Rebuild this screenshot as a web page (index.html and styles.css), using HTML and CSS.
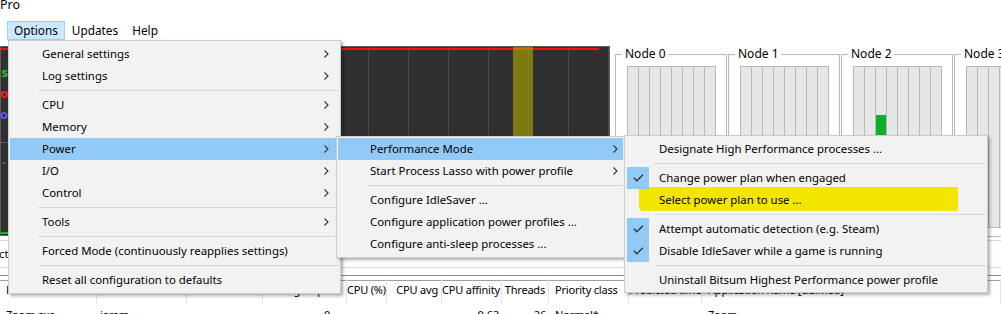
FILE: index.html
```html
<!DOCTYPE html>
<html>
<head>
<meta charset="utf-8">
<title>Process Lasso Pro</title>
<link rel="stylesheet" href="styles.css">
</head>
<body>
<div class="app">
  <div class="titlebar"><span class="title">Pro</span></div>
  <div class="menubar">
    <span class="mb-item active">Options</span>
    <span class="mb-item">Updates</span>
    <span class="mb-item">Help</span>
  </div>
  <div class="workspace">
    <div class="graph">
      <div class="legend">
        <span class="lg-green">ss</span>
        <span class="lg-red">o</span>
        <span class="lg-blue">o</span>
        <span class="lg-dots">..</span>
      </div>
      <div class="red-line"></div>
      <div class="hline"></div>
      <div class="band" style="left:512px"></div>
      <div class="green-line"></div>
    </div>
    <div class="nodes">
      <fieldset class="node">
        <legend>Node 0</legend>
        <div class="bars"><i></i><i></i><i></i><i></i><i></i><i></i><i></i><i></i></div>
      </fieldset>
      <fieldset class="node">
        <legend>Node 1</legend>
        <div class="bars"><i></i><i></i><i></i><i></i><i></i><i></i><i></i><i></i></div>
      </fieldset>
      <fieldset class="node">
        <legend>Node 2</legend>
        <div class="bars"><i></i><i></i><i><b style="height:112px"></b></i><i></i><i></i><i></i><i></i><i></i></div>
      </fieldset>
      <fieldset class="node">
        <legend>Node 3</legend>
        <div class="bars"><i></i><i></i><i></i><i></i><i></i><i></i><i></i><i></i></div>
      </fieldset>
    </div>
  </div>
  <div class="strip">
    <div class="tabrow"><span class="tabtext">ct</span></div>
  </div>
  <div class="splitter"></div>
  <div class="table">
    <div class="thead">
      <span class="c c0">Process name</span>
      <span class="c c1">User</span>
      <span class="c c2">Rules</span>
      <span class="c c3 r">CPU groups</span>
      <span class="c c4 r">CPU (%)</span>
      <span class="c c5 r">CPU avg</span>
      <span class="c c6 r">CPU affinity</span>
      <span class="c c7 r">Threads</span>
      <span class="c c8">Priority class</span>
      <span class="c c9 r">Predicted time</span>
      <span class="c c10">Application name [claimed]</span>
    </div>
    <div class="trow">
      <span class="c c0">Zoom.exe</span>
      <span class="c c1">jerem</span>
      <span class="c c2"></span>
      <span class="c c3 r">0</span>
      <span class="c c4 r"></span>
      <span class="c c5 r"></span>
      <span class="c c6 r">0-63</span>
      <span class="c c7 r">26</span>
      <span class="c c8">Normal*</span>
      <span class="c c9 r"></span>
      <span class="c c10">Zoom</span>
    </div>
  </div>
</div>

<div class="menu menu-main">
  <div class="mi">General settings<span class="arrow"><svg width="5" height="8" viewBox="0 0 5 8"><path d="M0.5 0.5 L4 4 L0.5 7.5" /></svg></span></div>
  <div class="mi">Log settings<span class="arrow"><svg width="5" height="8" viewBox="0 0 5 8"><path d="M0.5 0.5 L4 4 L0.5 7.5" /></svg></span></div>
  <div class="sep"></div>
  <div class="mi">CPU<span class="arrow"><svg width="5" height="8" viewBox="0 0 5 8"><path d="M0.5 0.5 L4 4 L0.5 7.5" /></svg></span></div>
  <div class="mi">Memory<span class="arrow"><svg width="5" height="8" viewBox="0 0 5 8"><path d="M0.5 0.5 L4 4 L0.5 7.5" /></svg></span></div>
  <div class="mi hot">Power<span class="arrow"><svg width="5" height="8" viewBox="0 0 5 8"><path d="M0.5 0.5 L4 4 L0.5 7.5" /></svg></span></div>
  <div class="mi">I/O<span class="arrow"><svg width="5" height="8" viewBox="0 0 5 8"><path d="M0.5 0.5 L4 4 L0.5 7.5" /></svg></span></div>
  <div class="mi">Control<span class="arrow"><svg width="5" height="8" viewBox="0 0 5 8"><path d="M0.5 0.5 L4 4 L0.5 7.5" /></svg></span></div>
  <div class="sep"></div>
  <div class="mi">Tools<span class="arrow"><svg width="5" height="8" viewBox="0 0 5 8"><path d="M0.5 0.5 L4 4 L0.5 7.5" /></svg></span></div>
  <div class="sep"></div>
  <div class="mi">Forced Mode (continuously reapplies settings)</div>
  <div class="sep"></div>
  <div class="mi">Reset all configuration to defaults</div>
</div>

<div class="menu menu-power">
  <div class="mi hot">Performance Mode<span class="arrow"><svg width="5" height="8" viewBox="0 0 5 8"><path d="M0.5 0.5 L4 4 L0.5 7.5" /></svg></span></div>
  <div class="mi">Start Process Lasso with power profile<span class="arrow"><svg width="5" height="8" viewBox="0 0 5 8"><path d="M0.5 0.5 L4 4 L0.5 7.5" /></svg></span></div>
  <div class="sep"></div>
  <div class="mi">Configure IdleSaver ...</div>
  <div class="mi">Configure application power profiles ...</div>
  <div class="mi">Configure anti-sleep processes ...</div>
</div>

<div class="menu menu-perf">
  <div class="mi"><span class="chk"></span>Designate High Performance processes ...</div>
  <div class="sep"></div>
  <div class="mi"><span class="chk on"><svg width="11" height="8" viewBox="0 0 11 8"><path d="M0.8 3.8 L3.8 6.8 L10 0.8" /></svg></span>Change power plan when engaged</div>
  <div class="mi marked"><span class="marker"></span><span class="chk"></span><span class="txt">Select power plan to use ...</span></div>
  <div class="sep"></div>
  <div class="mi"><span class="chk on"><svg width="11" height="8" viewBox="0 0 11 8"><path d="M0.8 3.8 L3.8 6.8 L10 0.8" /></svg></span>Attempt automatic detection (e.g. Steam)</div>
  <div class="mi"><span class="chk on"><svg width="11" height="8" viewBox="0 0 11 8"><path d="M0.8 3.8 L3.8 6.8 L10 0.8" /></svg></span>Disable IdleSaver while a game is running</div>
  <div class="sep"></div>
  <div class="mi"><span class="chk"></span>Uninstall Bitsum Highest Performance power profile</div>
</div>
</body>
</html>
```

FILE: styles.css
```css
* { box-sizing: border-box; }
html, body { margin: 0; padding: 0; }
body {
  width: 1001px;
  height: 314px;
  overflow: hidden;
  position: relative;
  background: #ffffff;
  font-family: "Noto Sans", "Open Sans", sans-serif;
  font-size: 11.4px;
  color: #000;
}
.app { width: 1001px; overflow: hidden; }

/* title + menubar */
.titlebar { height: 20px; overflow: hidden; }
.title { display: block; line-height: 14px; margin-top: -2px; font-size: 12.5px; }
.menubar { height: 20px; display: flex; align-items: flex-start; padding-left: 7px; }
.mb-item {
  margin-top: 1px;
  height: 19px;
  line-height: 17px;
  padding: 0 6px;
  border: 1px solid transparent;
  font-size: 11.8px;
}
.mb-item.active { background: #cce8ff; border-color: #99d1ff; }

/* workspace */
.workspace { display: flex; padding-top: 6px; height: 197px; }
.graph {
  flex: none;
  width: 610px;
  height: 190px;
  background-color: #303030;
  background-image: repeating-linear-gradient(to right, transparent 0 7px, #484848 7px 8px, transparent 8px 40px);
  border: 1px solid #5e5e5e;
  position: relative;
  overflow: hidden;
}
.legend {
  position: absolute;
  left: 0; top: 15px;
  width: 7px;
  overflow: hidden;
  display: flex;
  flex-direction: column;
  align-items: flex-end;
  font-weight: bold;
  font-size: 13px;
  line-height: 21px;
}
.legend span { display: block; white-space: nowrap; }
.lg-green { color: #2fbf2f; }
.lg-red { color: #ff1a1a; }
.lg-blue { color: #5a5aff; }
.lg-dots { color: #5a5aff; margin-top: 24px; letter-spacing: 2px; }
.red-line { position: absolute; left: 0; top: 1px; width: 598px; height: 2px; background: #e8161c; }
.hline { position: absolute; left: 0; right: 0; top: 95px; height: 1px; background: #5e5e5e; }
.band { position: absolute; top: 0; bottom: 0; width: 20px; background: rgba(170, 170, 0, 0.62); }
.green-line { position: absolute; left: 0; right: 0; bottom: 1px; height: 2px; background: #1fb51f; }

.nodes { flex: none; display: flex; gap: 1px; padding-left: 5px; }
.node {
  flex: none;
  width: 111px;
  height: 191px;
  margin: 0;
  padding: 0 10px 0 6px;
  border: 1px solid #b9b9b9;
  border-radius: 0;
}
.node legend { padding: 0 2px 0 3px; line-height: 16px; font-size: 12px; }
.bars {
  margin-top: 4px;
  margin-left: 5px;
  width: 89px;
  height: 162px;
  display: flex;
  gap: 1px;
  background: #b8b8b8;
  border: 1px solid #b8b8b8;
}
.bars i {
  display: flex;
  flex-direction: column;
  justify-content: flex-end;
  width: 10px;
  background: #e6e6e6;
}
.bars b { display: block; background: #08b02c; }

/* strip & splitter */
.strip { height: 33px; padding-top: 3px; }
.tabrow {
  height: 28px;
  border-top: 1px solid #d9d9d9;
  border-bottom: 1px solid #d9d9d9;
  line-height: 26px;
  overflow: hidden;
}
.tabtext { display: inline-block; margin-left: -1px; }
.splitter { height: 9px; padding-top: 5px; }
.splitter::before { content: ""; display: block; height: 4px; border-top: 1px solid #8a8a8a; border-bottom: 1px solid #a0a0a0; }

/* table */
.table { width: 1001px; font-size: 11px; letter-spacing: -0.2px; }
.thead, .trow {
  display: grid;
  grid-template-columns: 97px 90px 76px 84px 40px 55px 60px 47px 80px 73px 1fr;
}
.thead { height: 25px; line-height: 22px; }
.thead .c { border-right: 1px solid #e5e5e5; }
.trow { height: 18px; line-height: 22px; }
.c { padding: 0 4px 0 6px; white-space: nowrap; overflow: hidden; text-overflow: clip; }
.c.r { text-align: right; padding: 0 3px 0 0; }
.c1 { padding-left: 3px; }
.c3.r { padding-right: 17px; }
.c4.r { padding-right: 3px; }

/* menus */
.menu {
  position: absolute;
  background: #f2f2f2;
  border: 1px solid #cccccc;
  box-shadow: 2px 2px 3px rgba(0, 0, 0, 0.32);
}
.menu-main { left: 8px; top: 40px; width: 333px; padding: 2px 1px 2px 1px; }
.menu-power { left: 336px; top: 136px; width: 289px; padding: 1px 1px 2px 1px; }
.menu-perf { left: 624px; top: 135px; width: 364px; padding: 2px 1px 1px 1px; }
.mi {
  position: relative;
  display: flex;
  align-items: center;
  height: 22px;
  padding-left: 32px;
  padding-bottom: 2px;
  white-space: nowrap;
}
.mi.hot { background: #91c9f7; }
.arrow { margin-left: auto; display: flex; align-items: center; padding-right: 10px; padding-top: 2px; }
.menu-power .arrow { padding-right: 5px; }
.arrow svg path { fill: none; stroke: #333; stroke-width: 1.1; }
.sep { height: 7px; padding: 3px 0 3px 28px; }
.sep::before { content: ""; display: block; height: 1px; background: #d7d7d7; }
.menu-perf .mi { padding-left: 1px; }
.menu-perf .sep { padding-left: 29px; padding-right: 1px; }
.chk { flex: none; width: 22px; height: 22px; margin-top: 2px; margin-right: 10px; display: flex; align-items: center; justify-content: center; position: relative; z-index: 1; }
.chk.on { background: #91c9f7; }
.chk svg path { fill: none; stroke: #333; stroke-width: 1.3; }
.txt { position: relative; z-index: 1; }
.marker {
  position: absolute;
  left: 13px;
  top: -2px;
  width: 319px;
  height: 24px;
  background: #f2e600;
  border-radius: 3px 1px 1px 4px;
}
```
